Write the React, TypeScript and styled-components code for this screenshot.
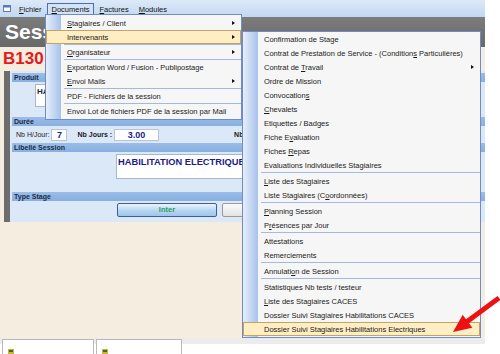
import styled, { createGlobalStyle, css } from "styled-components";

const GlobalStyle = createGlobalStyle`
  html, body { margin: 0; padding: 0; background: #fff; }
  body { font-family: "Liberation Sans", Arial, sans-serif; }
`;

const Screen = styled.div`
  position: relative;
  width: 500px;
  height: 354px;
  overflow: hidden;
  background: #fff;
`;

const Window = styled.div`
  width: 485px;
  height: 338px;
  display: flex;
  flex-direction: column;
  background: #f4ede0;
`;

const MenuBar = styled.div`
  height: 17px;
  flex: none;
  display: flex;
  align-items: flex-start;
  padding-left: 3px;
  box-sizing: border-box;
  background: linear-gradient(#dce9f9, #c3d7f1);
`;

const AppIcon = styled.svg`
  margin: 5px 3px 0 0;
`;

const BarItem = styled.div<{ $open?: boolean }>`
  margin-top: 3px;
  height: 12px;
  padding: 0 4px;
  box-sizing: border-box;
  border: 1px solid transparent;
  border-bottom: none;
  font-size: 7.5px;
  line-height: 11px;
  color: #111;
  ${(p) =>
    p.$open &&
    css`
      border-color: #4d6fb1;
      background: #d3e2f6;
    `}
`;

const TitleBand = styled.div`
  height: 30px;
  flex: none;
  padding-left: 5px;
  background: linear-gradient(#7c7c7c, #686868);
  color: #fff;
  font-size: 21px;
  font-weight: bold;
  line-height: 30px;
`;

const CodeRow = styled.div`
  height: 24px;
  flex: none;
  padding-left: 3px;
  color: #e31b1b;
  font-size: 17px;
  font-weight: bold;
  line-height: 24px;
`;

const FormPanel = styled.div`
  height: 151px;
  flex: none;
  margin-left: 4px;
  padding: 2px 0 0 2px;
  box-sizing: border-box;
  border-left: 6px solid #6d6d6d;
  background: #dbe8f8;
  display: flex;
  flex-direction: column;
`;

const SectionHeader = styled.div`
  height: 9px;
  flex: none;
  padding-left: 2px;
  background: linear-gradient(#9bbde8, #87afe0);
  color: #1b2a44;
  font-size: 7px;
  font-weight: bold;
  line-height: 9px;
`;

const SectionBody = styled.div<{ $h: number; $pad: number }>`
  height: ${(p) => p.$h}px;
  flex: none;
  box-sizing: border-box;
  padding: 2px 0 0 ${(p) => p.$pad}px;
  display: flex;
  align-items: flex-start;
  gap: 5px;
`;

const TextBox = styled.div<{ $w: number; $h: number; $size: number; $color: string }>`
  width: ${(p) => p.$w}px;
  height: ${(p) => p.$h}px;
  box-sizing: border-box;
  padding: 2px 0 0 1px;
  background: #fff;
  border: 1px solid #a7b6ca;
  color: ${(p) => p.$color};
  font-size: ${(p) => p.$size}px;
  font-weight: bold;
  white-space: nowrap;
  overflow: hidden;
`;

const FieldRow = styled.div`
  height: 17px;
  flex: none;
  display: flex;
  align-items: center;
  padding-left: 4px;
`;

const Label = styled.span<{ $bold?: boolean; $ml?: number }>`
  margin-left: ${(p) => p.$ml ?? 0}px;
  font-size: 7px;
  font-weight: ${(p) => (p.$bold ? "bold" : "normal")};
  color: #1a1a1a;
  white-space: nowrap;
`;

const Field = styled.div<{ $w: number; $ml: number }>`
  width: ${(p) => p.$w}px;
  height: 12px;
  margin-left: ${(p) => p.$ml}px;
  box-sizing: border-box;
  background: #fff;
  border: 1px solid #b7c4d4;
  color: #1c1c86;
  font-size: 9px;
  font-weight: bold;
  line-height: 10px;
  text-align: center;
`;

const StageButton = styled.div<{ $primary?: boolean; $w: number }>`
  width: ${(p) => p.$w}px;
  height: 14px;
  box-sizing: border-box;
  border: 1px solid ${(p) => (p.$primary ? "#3f5e97" : "#9a9a9a")};
  border-radius: 2px;
  background: ${(p) =>
    p.$primary
      ? "linear-gradient(#eaf4fc, #b5d6f1 55%, #9cc6ec)"
      : "linear-gradient(#fbfbfb, #e3e3e3)"};
  color: #2f9c60;
  font-size: 7.5px;
  font-weight: bold;
  line-height: 12px;
  text-align: center;
`;

const Filler = styled.div`
  flex: 1;
`;

const Footer = styled.div`
  width: 485px;
  height: 16px;
  display: flex;
  gap: 2px;
  padding-left: 2px;
  box-sizing: border-box;
  background: linear-gradient(#ececec 0 6px, #fff 6px);
`;

const Tab = styled.div<{ $w: number }>`
  width: ${(p) => p.$w}px;
  height: 15px;
  margin-top: 1px;
  box-sizing: border-box;
  padding: 1px 0 0 5px;
  background: #fff;
  border: 1px solid #b9b9b9;
  border-bottom: none;
`;

const Menu = styled.div<{ $left: number; $top: number; $width: number; $padTop: number }>`
  position: absolute;
  left: ${(p) => p.$left}px;
  top: ${(p) => p.$top}px;
  width: ${(p) => p.$width}px;
  box-sizing: border-box;
  padding: ${(p) => p.$padTop}px 0 1px;
  border: 1px solid #6f8cc4;
  background: linear-gradient(to right, #e6eefa 0, #a8c2ec 15px, #f6f6f6 15px);
`;

const MenuRow = styled.div<{ $active?: boolean }>`
  height: 14px;
  display: flex;
  align-items: center;
  box-sizing: border-box;
  padding: 0 5px 0 20px;
  border: 1px solid transparent;
  font-size: 7.5px;
  color: #1a1a1a;
  white-space: nowrap;
  ${(p) =>
    p.$active &&
    css`
      background: #ffeec4;
      border-color: #c4a461;
    `}
`;

const RowText = styled.span`
  white-space: pre;
`;

const SubArrow = styled.span`
  margin-left: auto;
  width: 0;
  height: 0;
  border-left: 3px solid #111;
  border-top: 2.5px solid transparent;
  border-bottom: 2.5px solid transparent;
`;

const Separator = styled.div<{ $space: number }>`
  height: ${(p) => p.$space}px;
  margin-left: 18px;
  border-top: 1px solid #a3b9e0;
  box-sizing: border-box;
`;

const Pointer = styled.svg`
  position: absolute;
  left: 440px;
  top: 285px;
`;

type Item = { label: React.ReactNode; sub?: boolean; active?: boolean; sepAfter?: boolean };

const documentsMenu: Item[] = [
  { label: <><u>S</u>tagiaires / Client</>, sub: true },
  { label: "Intervenants", sub: true, active: true, sepAfter: true },
  { label: <><u>O</u>rganisateur</>, sub: true, sepAfter: true },
  { label: <><u>E</u>xportation Word / Fusion - Publipostage</> },
  { label: <><u>E</u>nvoi Mails</>, sub: true, sepAfter: true },
  { label: "PDF - Fichiers de la session", sepAfter: true },
  { label: "Envoi Lot de fichiers PDF de la session par Mail" },
];

const intervenantsMenu: Item[] = [
  { label: "Confirmation de Stage" },
  { label: <>Contrat de Prestation de Service - (Condition<u>s</u> Particulières)</> },
  { label: <>Contrat de <u>T</u>ravail</>, sub: true },
  { label: "Ordre de Mission" },
  { label: <>Convocation<u>s</u></> },
  { label: <><u>C</u>hevalets</> },
  { label: "Etiquettes / Badges" },
  { label: <>Fiche E<u>v</u>aluation</> },
  { label: <>Fiches <u>R</u>epas</> },
  { label: "Evaluations Individuelles Stagiaires", sepAfter: true },
  { label: <><u>L</u>iste des Stagiaires</> },
  { label: <>Liste Stagiaires (C<u>o</u>ordonnées)</>, sepAfter: true },
  { label: <><u>P</u>lanning Session</> },
  { label: <>P<u>r</u>ésences par Jour</>, sepAfter: true },
  { label: "Attestations" },
  { label: "Remerciements", sepAfter: true },
  { label: <>Annulati<u>o</u>n de Session</>, sepAfter: true },
  { label: "Statistiques Nb tests / testeur" },
  { label: <><u>L</u>iste des Stagiaires CACES</> },
  { label: "Dossier Suivi Stagiaires Habilitations CACES" },
  { label: "Dossier Suivi Stagiaires Habilitations Electriques", active: true },
];

const MenuList = ({ items, space }: { items: Item[]; space: number }) => (
  <>
    {items.map((it, i) => (
      <div key={i}>
        <MenuRow $active={it.active}>
          <RowText>{it.label}</RowText>
          {it.sub && <SubArrow />}
        </MenuRow>
        {it.sepAfter && <Separator $space={space} />}
      </div>
    ))}
  </>
);

const TabIcon = () => (
  <svg width="6" height="6" viewBox="0 0 6 6">
    <rect x="0" y="0" width="6" height="6" fill="#c9b53a" />
    <rect x="1" y="1" width="4" height="2" fill="#3a6d2a" />
  </svg>
);

export default function App() {
  return (
    <Screen>
      <GlobalStyle />
      <Window>
        <MenuBar>
          <AppIcon width="8" height="7" viewBox="0 0 8 7">
            <rect x="0.5" y="0.5" width="7" height="6" fill="#fff" stroke="#6a7d9c" />
            <rect x="1" y="1" width="6" height="1.5" fill="#4a78c4" />
          </AppIcon>
          <BarItem><u>F</u>ichier</BarItem>
          <BarItem $open><u>D</u>ocuments</BarItem>
          <BarItem><u>F</u>actures</BarItem>
          <BarItem><u>M</u>odules</BarItem>
        </MenuBar>
        <TitleBand>Sess</TitleBand>
        <CodeRow>B130</CodeRow>
        <FormPanel>
          <SectionHeader>Produit</SectionHeader>
          <SectionBody $h={35} $pad={23}>
            <TextBox $w={400} $h={23} $size={8} $color="#1e1e30">HA</TextBox>
          </SectionBody>
          <SectionHeader>Durée</SectionHeader>
          <FieldRow>
            <Label>Nb H/Jour:</Label>
            <Field $w={16} $ml={2}>7</Field>
            <Label $bold $ml={10}>Nb Jours :</Label>
            <Field $w={45} $ml={2}>3.00</Field>
            <Label $bold $ml={75}>Nb</Label>
          </FieldRow>
          <SectionHeader>Libellé Session</SectionHeader>
          <SectionBody $h={40} $pad={104}>
            <TextBox $w={300} $h={25} $size={9.3} $color="#1c1c86">HABILITATION ELECTRIQUE</TextBox>
          </SectionBody>
          <SectionHeader>Type Stage</SectionHeader>
          <SectionBody $h={21} $pad={105}>
            <StageButton $primary $w={100}>Inter</StageButton>
            <StageButton $w={100} />
          </SectionBody>
        </FormPanel>
        <Filler />
      </Window>
      <Footer>
        <Tab $w={92}><TabIcon /></Tab>
        <Tab $w={86}><TabIcon /></Tab>
      </Footer>

      <Menu $left={45} $top={14} $width={197} $padTop={1}>
        <MenuList items={documentsMenu} space={1} />
      </Menu>
      <Menu $left={242} $top={31} $width={239} $padTop={0}>
        <MenuList items={intervenantsMenu} space={2} />
      </Menu>

      <Pointer width="60" height="55" viewBox="440 285 60 55">
        <polygon
          points="453,332 462.7,314.8 466,319.3 497.5,296 500.5,300 469,323.3 472.3,327.8"
          fill="#ee1111"
        />
      </Pointer>
    </Screen>
  );
}
